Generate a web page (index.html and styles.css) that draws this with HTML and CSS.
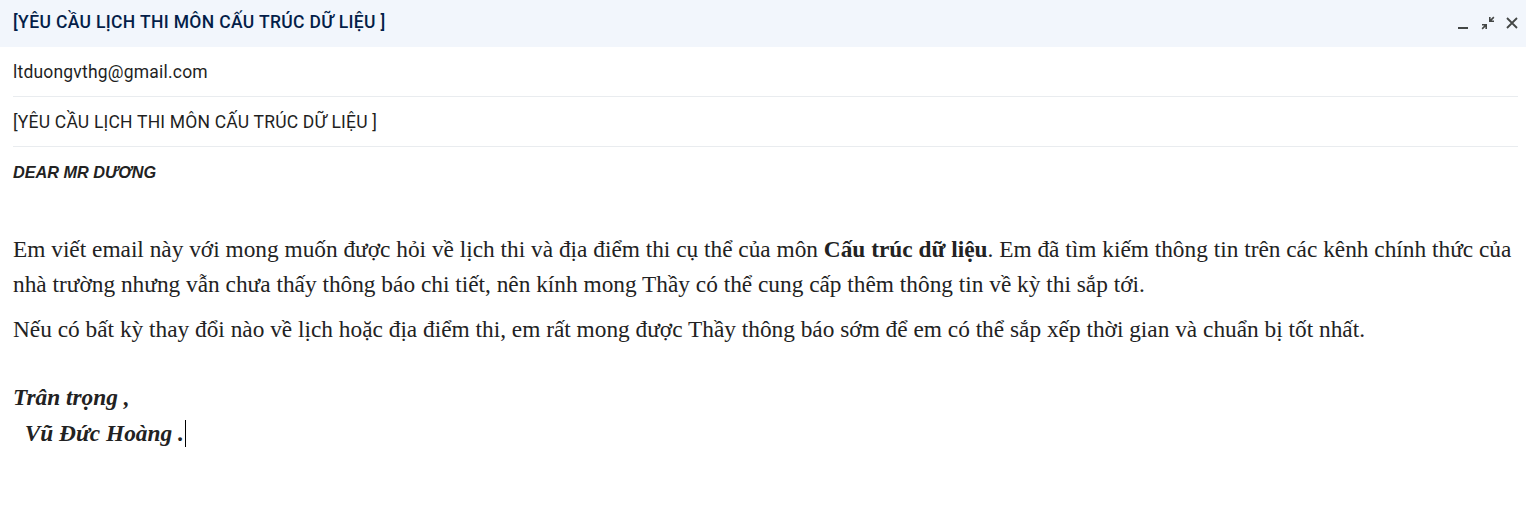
FILE: index.html
```html
<!DOCTYPE html>
<html lang="vi">
<head>
<meta charset="utf-8">
<title>Compose</title>
<link rel="stylesheet" href="styles.css">
</head>
<body>
<div class="compose">
  <div class="header">
    <div class="title">[YÊU CẦU LỊCH THI MÔN CẤU TRÚC DỮ LIỆU ]</div>
    <div class="actions">
      <svg class="ic" width="16" height="16" viewBox="0 0 16 16"><rect x="2" y="12" width="10" height="2" fill="#444746"/></svg>
      <svg class="ic" width="16" height="16" viewBox="0 0 16 16"><g fill="#444746"><path d="M9 2h1.6v2.3L13.3 1.6l1.1 1.1-2.7 2.7H14V7H9z"/><path d="M7 14H5.4v-2.3L2.7 14.4 1.6 13.3l2.7-2.7H2V9h5z"/></g></svg>
      <svg class="ic" width="16" height="16" viewBox="0 0 16 16"><path d="M3 3l10 10M13 3L3 13" stroke="#444746" stroke-width="1.8"/></svg>
    </div>
  </div>
  <div class="fields">
    <div class="row">ltduongvthg@gmail.com</div>
    <div class="row">[YÊU CẦU LỊCH THI MÔN CẤU TRÚC DỮ LIỆU ]</div>
  </div>
  <div class="body">
    <div class="dear">DEAR MR DƯƠNG</div>
    <p class="para first">Em viết email này với mong muốn được hỏi về lịch thi và địa điểm thi cụ thể của môn <b>Cấu trúc dữ liệu</b>. Em đã tìm kiếm thông tin trên các kênh chính thức của nhà trường nhưng vẫn chưa thấy thông báo chi tiết, nên kính mong Thầy có thể cung cấp thêm thông tin về kỳ thi sắp tới.</p>
    <p class="para">Nếu có bất kỳ thay đổi nào về lịch hoặc địa điểm thi, em rất mong được Thầy thông báo sớm để em có thể sắp xếp thời gian và chuẩn bị tốt nhất.</p>
    <div class="sign">
      <div>Trân trọng ,</div>
      <div>&nbsp; Vũ Đức Hoàng .<span class="caret"></span></div>
    </div>
  </div>
</div>
</body>
</html>
```
FILE: styles.css
```css
html, body {
  margin: 0;
  padding: 0;
  background: #ffffff;
}
.compose {
  width: 1526px;
  height: 514px;
  font-family: Roboto, "Liberation Sans", Arial, sans-serif;
}
.header {
  height: 47px;
  background: #f2f6fc;
  display: flex;
  align-items: center;
  justify-content: space-between;
  padding: 0 6px 0 13px;
  box-sizing: border-box;
}
.title {
  font-size: 17.5px;
  font-weight: 500;
  color: #041e49;
  letter-spacing: 0.35px;
  padding-bottom: 4px;
}
.actions {
  display: flex;
  align-items: center;
  gap: 8px;
  padding-bottom: 2px;
}
.ic {
  display: block;
}
.fields {
  padding: 0 8px 0 13px;
}
.row {
  height: 50px;
  box-sizing: border-box;
  border-bottom: 1px solid #e9ecef;
  display: flex;
  align-items: center;
  padding-top: 1px;
  font-size: 17.5px;
  letter-spacing: 0.2px;
  color: #1f1f1f;
}
.body {
  padding: 17px 13px 0 13px;
}
.dear {
  font-family: "Liberation Sans", Arial, sans-serif;
  font-weight: bold;
  font-style: italic;
  font-size: 16.25px;
  color: #222222;
  line-height: 16px;
}
.para {
  font-family: "Liberation Serif", "Times New Roman", serif;
  font-size: 23.33px;
  line-height: 35px;
  color: #222222;
  margin: 0 0 10px 0;
}
.para.first {
  margin-top: 52px;
}
.sign {
  margin-top: 32px;
  font-family: "Liberation Serif", "Times New Roman", serif;
  font-weight: bold;
  font-style: italic;
  font-size: 23.33px;
  line-height: 36px;
  color: #222222;
}
.caret {
  display: inline-block;
  width: 1px;
  height: 27px;
  background: #000;
  vertical-align: -6px;
  margin-left: 1px;
}
```
